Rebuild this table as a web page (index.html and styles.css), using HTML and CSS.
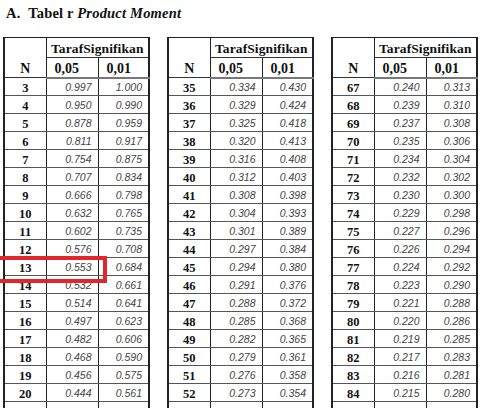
FILE: index.html
```html
<!DOCTYPE html>
<html>
<head>
<meta charset="utf-8">
<link rel="stylesheet" href="styles.css">
</head>
<body>
<div class="page">
  <h1 class="title">A.&nbsp;&nbsp;Tabel r <i>Product Moment</i></h1>
  <div class="tables">
    <table class="rt">
      <colgroup><col class="cn"><col class="cv"><col></colgroup>
      <thead>
        <tr class="h1"><th class="hn" rowspan="2">N</th><th class="hs" colspan="2">TarafSignifikan</th></tr>
        <tr class="h2"><th>0,05</th><th>0,01</th></tr>
      </thead>
      <tbody>
        <tr><td>3</td><td>0.997</td><td>1.000</td></tr>
        <tr><td>4</td><td>0.950</td><td>0.990</td></tr>
        <tr><td>5</td><td>0.878</td><td>0.959</td></tr>
        <tr><td>6</td><td>0.811</td><td>0.917</td></tr>
        <tr><td>7</td><td>0.754</td><td>0.875</td></tr>
        <tr><td>8</td><td>0.707</td><td>0.834</td></tr>
        <tr><td>9</td><td>0.666</td><td>0.798</td></tr>
        <tr><td>10</td><td>0.632</td><td>0.765</td></tr>
        <tr><td>11</td><td>0.602</td><td>0.735</td></tr>
        <tr><td>12</td><td>0.576</td><td>0.708</td></tr>
        <tr><td>13</td><td>0.553</td><td>0.684</td></tr>
        <tr><td>14</td><td>0.532</td><td>0.661</td></tr>
        <tr><td>15</td><td>0.514</td><td>0.641</td></tr>
        <tr><td>16</td><td>0.497</td><td>0.623</td></tr>
        <tr><td>17</td><td>0.482</td><td>0.606</td></tr>
        <tr><td>18</td><td>0.468</td><td>0.590</td></tr>
        <tr><td>19</td><td>0.456</td><td>0.575</td></tr>
        <tr><td>20</td><td>0.444</td><td>0.561</td></tr>
        <tr><td></td><td></td><td></td></tr>
      </tbody>
    </table>
    <table class="rt">
      <colgroup><col class="cn"><col class="cv"><col></colgroup>
      <thead>
        <tr class="h1"><th class="hn" rowspan="2">N</th><th class="hs" colspan="2">TarafSignifikan</th></tr>
        <tr class="h2"><th>0,05</th><th>0,01</th></tr>
      </thead>
      <tbody>
        <tr><td>35</td><td>0.334</td><td>0.430</td></tr>
        <tr><td>36</td><td>0.329</td><td>0.424</td></tr>
        <tr><td>37</td><td>0.325</td><td>0.418</td></tr>
        <tr><td>38</td><td>0.320</td><td>0.413</td></tr>
        <tr><td>39</td><td>0.316</td><td>0.408</td></tr>
        <tr><td>40</td><td>0.312</td><td>0.403</td></tr>
        <tr><td>41</td><td>0.308</td><td>0.398</td></tr>
        <tr><td>42</td><td>0.304</td><td>0.393</td></tr>
        <tr><td>43</td><td>0.301</td><td>0.389</td></tr>
        <tr><td>44</td><td>0.297</td><td>0.384</td></tr>
        <tr><td>45</td><td>0.294</td><td>0.380</td></tr>
        <tr><td>46</td><td>0.291</td><td>0.376</td></tr>
        <tr><td>47</td><td>0.288</td><td>0.372</td></tr>
        <tr><td>48</td><td>0.285</td><td>0.368</td></tr>
        <tr><td>49</td><td>0.282</td><td>0.365</td></tr>
        <tr><td>50</td><td>0.279</td><td>0.361</td></tr>
        <tr><td>51</td><td>0.276</td><td>0.358</td></tr>
        <tr><td>52</td><td>0.273</td><td>0.354</td></tr>
        <tr><td></td><td></td><td></td></tr>
      </tbody>
    </table>
    <table class="rt">
      <colgroup><col class="cn"><col class="cv"><col></colgroup>
      <thead>
        <tr class="h1"><th class="hn" rowspan="2">N</th><th class="hs" colspan="2">TarafSignifikan</th></tr>
        <tr class="h2"><th>0,05</th><th>0,01</th></tr>
      </thead>
      <tbody>
        <tr><td>67</td><td>0.240</td><td>0.313</td></tr>
        <tr><td>68</td><td>0.239</td><td>0.310</td></tr>
        <tr><td>69</td><td>0.237</td><td>0.308</td></tr>
        <tr><td>70</td><td>0.235</td><td>0.306</td></tr>
        <tr><td>71</td><td>0.234</td><td>0.304</td></tr>
        <tr><td>72</td><td>0.232</td><td>0.302</td></tr>
        <tr><td>73</td><td>0.230</td><td>0.300</td></tr>
        <tr><td>74</td><td>0.229</td><td>0.298</td></tr>
        <tr><td>75</td><td>0.227</td><td>0.296</td></tr>
        <tr><td>76</td><td>0.226</td><td>0.294</td></tr>
        <tr><td>77</td><td>0.224</td><td>0.292</td></tr>
        <tr><td>78</td><td>0.223</td><td>0.290</td></tr>
        <tr><td>79</td><td>0.221</td><td>0.288</td></tr>
        <tr><td>80</td><td>0.220</td><td>0.286</td></tr>
        <tr><td>81</td><td>0.219</td><td>0.285</td></tr>
        <tr><td>82</td><td>0.217</td><td>0.283</td></tr>
        <tr><td>83</td><td>0.216</td><td>0.281</td></tr>
        <tr><td>84</td><td>0.215</td><td>0.280</td></tr>
        <tr><td></td><td></td><td></td></tr>
      </tbody>
    </table>
  </div>
  <div class="highlight"></div>
</div>
</body>
</html>
```
FILE: styles.css
```css
html, body {
  margin: 0;
  padding: 0;
  background: #fff;
}
body {
  width: 483px;
  height: 408px;
  overflow: hidden;
}
.page {
  position: relative;
  width: 483px;
  height: 408px;
  overflow: hidden;
  font-family: "Liberation Serif", "Times New Roman", serif;
  color: #111;
}
.title {
  margin: 0 0 15px 0;
  padding: 4px 0 0 6px;
  font-size: 14.5px;
  line-height: 18px;
  font-weight: bold;
  letter-spacing: 0.2px;
}
.title i {
  font-style: italic;
}
.tables {
  display: flex;
  gap: 17px;
  padding-left: 3px;
}
.rt {
  width: 147px;
  table-layout: fixed;
  border-collapse: collapse;
  border-left: 2px solid #222;
  border-right: 2px solid #222;
  border-top: 1px solid #222;
  flex: none;
}
.rt .cn { width: 42px; }
.rt .cv { width: 52px; }
.rt th {
  font-weight: bold;
  font-size: 14px;
  padding: 0 0 1px 0;
  vertical-align: bottom;
  border-left: 1px solid #222;
  border-right: 1px solid #222;
  line-height: 15px;
}
.rt .h1 { height: 20px; }
.rt .h1 th { border-bottom: 1px solid #333; }
.rt .h2 { height: 20px; }
.rt .h2 th {
  border-bottom: 2px solid #777;
  text-align: left;
  padding-left: 8px;
}
.rt .hn {
  text-align: center;
  border-bottom: 2px solid #777;
  padding-bottom: 1px;
}
.rt .hs {
  text-align: center;
  font-size: 13.5px;
  letter-spacing: 0.1px;
}
.rt tbody tr { height: 18px; }
.rt td {
  border: 1px solid #555;
  border-left-color: #222;
  border-right-color: #222;
  padding: 0 6px 0 0;
  line-height: 14px;
  vertical-align: middle;
  font-family: "Liberation Sans", Arial, sans-serif;
  font-style: italic;
  font-size: 10.5px;
  color: #444;
  text-align: right;
}
.rt td:first-child {
  font-family: "Liberation Serif", "Times New Roman", serif;
  font-style: normal;
  font-weight: bold;
  font-size: 12.5px;
  color: #111;
  text-align: center;
  padding: 2px 0 0 0;
}
.highlight {
  position: absolute;
  left: -6px;
  top: 256px;
  width: 105px;
  height: 19px;
  border: 4px solid #e3262b;
}
```
